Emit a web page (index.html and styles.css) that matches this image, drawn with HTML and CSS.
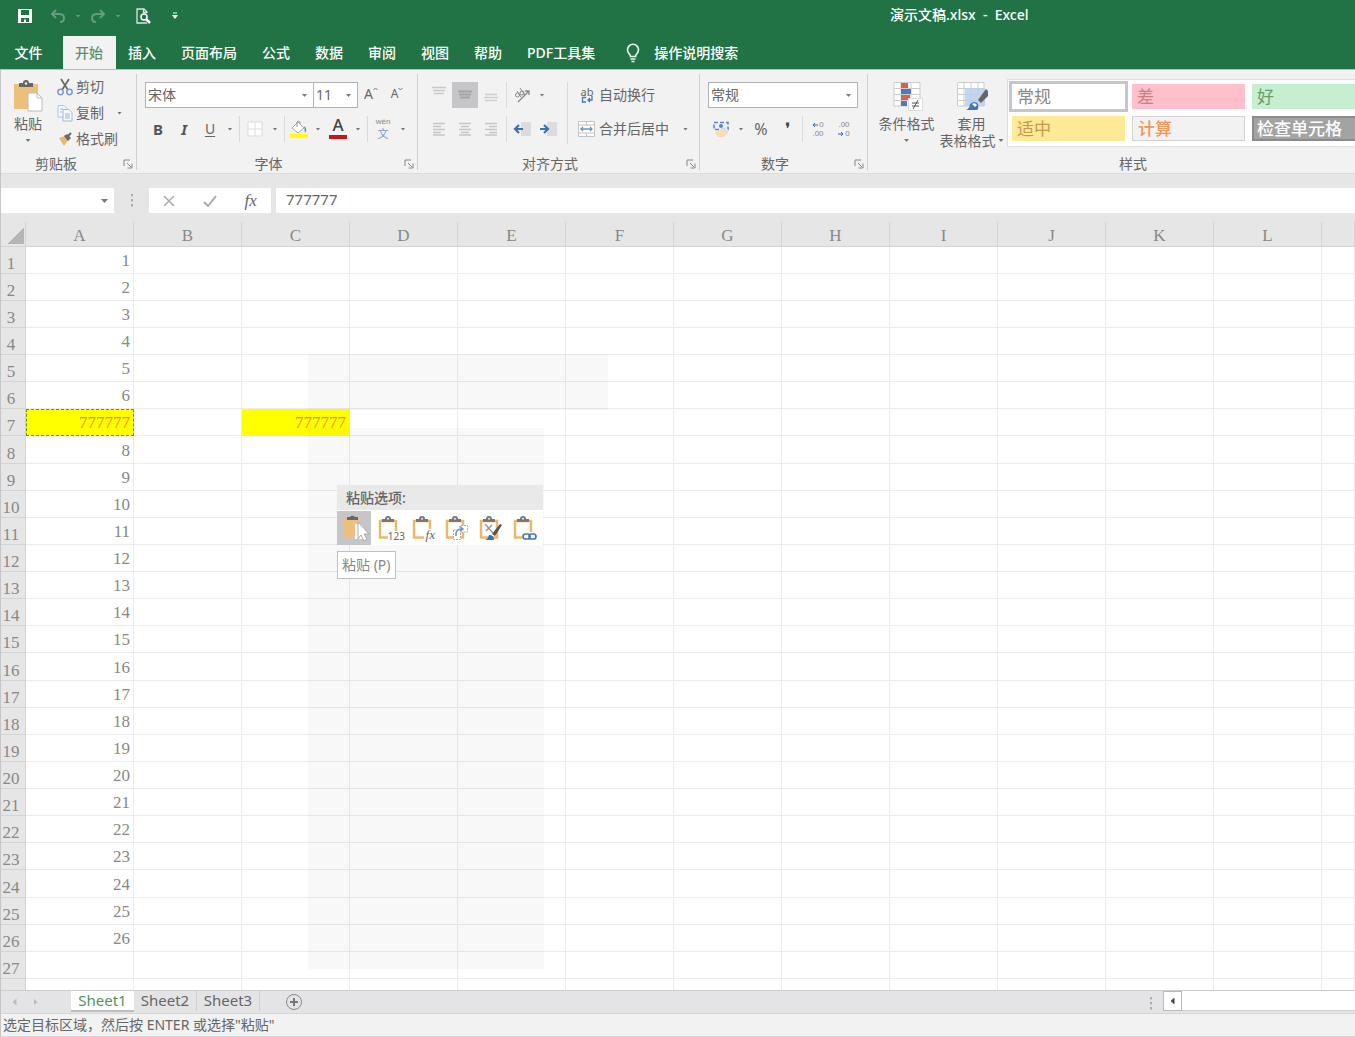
FILE: index.html
```html
<!DOCTYPE html>
<html lang="zh-CN">
<head>
<meta charset="utf-8">
<title>演示文稿.xlsx - Excel</title>
<link rel="stylesheet" href="styles.css">
</head>
<body>
<svg class="defs" width="0" height="0" aria-hidden="true">
  <symbol id="clip" viewBox="0 0 24 26">
    <path d="M4 6H20V22.500H4Z" fill="#fff" stroke="#ecb76c" stroke-width="2.500"/>
    <path d="M6 7V4h3a3 3 0 0 1 6 0h3v3Z" fill="#777"/>
    <circle cx="12" cy="3.800" r="1" fill="#eee"/>
  </symbol>
  <symbol id="launch" viewBox="0 0 10 10">
    <path d="M1 7V1H7M4 4L8 8M9 4.500V9H4.500" fill="none" stroke="#888"/>
  </symbol>
</svg>

<header class="top">
  <div class="titlebar">
    <div class="quick">
      <button aria-label="保存"><svg width="16" height="16" viewBox="0 0 16 16"><path d="M1 1H15V15H1Z" fill="#fff"/><path d="M4 2H12V7H4ZM4 10H12V14H9V11.500H7V14H4Z" fill="#217346"/></svg></button>
      <button class="dim" aria-label="撤消"><svg width="16" height="16" viewBox="0 0 16 16"><path d="M6 2L2 6L6 10M2 6H9Q14 6 14 10T10 14" fill="none" stroke="#fff" stroke-width="2"/></svg></button>
      <button class="dim tiny" aria-label="撤消选项"><i class="tri"></i></button>
      <button class="dim" aria-label="恢复"><svg width="16" height="16" viewBox="0 0 16 16"><path d="M10 2L14 6L10 10M14 6H7Q2 6 2 10T6 14" fill="none" stroke="#fff" stroke-width="2"/></svg></button>
      <button class="dim tiny" aria-label="恢复选项"><i class="tri"></i></button>
      <button class="preview" aria-label="打印预览"><svg width="16" height="18" viewBox="0 0 16 18"><path d="M12 16H2V2H9L12 5V6M8.500 2V5.500H12" fill="none" stroke="#d5e8dc" stroke-width="1.300"/><circle cx="9" cy="10" r="3" fill="none" stroke="#fff" stroke-width="1.500"/><path d="M11 12L15 16" stroke="#fff" stroke-width="2.500"/></svg></button>
      <button class="more" aria-label="自定义快速访问工具栏"><svg width="6" height="8" viewBox="0 0 6 8"><path d="M1 1H5" stroke="#fff"/><path d="M0 3H6L3 7Z" fill="#fff"/></svg></button>
    </div>
    <div class="title">演示文稿.xlsx&nbsp; -&nbsp; Excel</div>
  </div>
  <nav class="tabs">
    <button class="file">文件</button><button class="on">开始</button><button>插入</button><button>页面布局</button><button>公式</button><button>数据</button><button>审阅</button><button>视图</button><button>帮助</button><button>PDF工具集</button>
    <button class="tell"><svg width="16" height="20" viewBox="0 0 16 20"><path d="M5.500 13.500Q5.500 12 4 10.500A5.500 5.500 0 1 1 12 10.500Q10.500 12 10.500 13.500Z" fill="none" stroke="#e9f5ee" stroke-width="1.700"/><path d="M5.500 16H10.500M6.500 18.500H9.500" stroke="#e9f5ee" stroke-width="1.700"/></svg>操作说明搜索</button>
  </nav>
</header>

<main class="app">
  <section class="ribbon">
    <div class="group clipboard">
      <div class="body flat">
        <button class="big paste">
          <svg width="30" height="32" viewBox="0 0 30 32"><path d="M1 4H25V29H1Z" fill="#ecc07c"/><path d="M6 7V3h4a3 3 0 0 1 6 0h4v4Z" fill="#666"/><circle cx="13" cy="3.500" r="1.200" fill="#eee"/><path d="M15 13H24L29 18V31H15Z" fill="#fff" stroke="#bbb"/><path d="M24 13V18H29" fill="none" stroke="#bbb"/></svg>
          <span>粘贴</span><i class="tri"></i>
        </button>
        <div class="stack">
          <button><svg width="18" height="18" viewBox="0 0 18 18"><path d="M5 1L12 12M13 1L6 12" stroke="#666" stroke-width="1.700"/><circle cx="4.500" cy="14" r="2.700" fill="none" stroke="#7c9cce" stroke-width="1.500"/><circle cx="13.500" cy="14" r="2.700" fill="none" stroke="#7c9cce" stroke-width="1.500"/></svg>剪切</button>
          <button><svg width="18" height="18" viewBox="0 0 18 18"><path d="M2 1.500H8L11 4.500V13H2Z" fill="#f5f8fd" stroke="#b4c2da"/><path d="M7 5.500H13L16 8.500V17H7Z" fill="#f5f8fd" stroke="#a6b7d4"/><path d="M4 5H7M4 8H6M9 10H14M9 12H14M9 14H14" stroke="#9bb3da"/></svg>复制<i class="tri push"></i></button>
          <button><svg width="18" height="18" viewBox="0 0 18 18"><path d="M3 8L9 6L12 10L8 16Z" fill="#edb667"/><path d="M8 6L12 11L15 8L11 4Z" fill="#666"/><path d="M12 6L15 3" stroke="#666" stroke-width="2"/></svg>格式刷</button>
        </div>
      </div>
      <div class="label"><span>剪贴板</span><button aria-label="剪贴板设置"><svg width="10" height="10"><use href="#launch"/></svg></button></div>
    </div>

    <div class="group font">
      <div class="body">
        <div class="row">
          <span class="combo name"><select aria-label="字体"><option>宋体</option></select></span><span class="combo size"><select aria-label="字号"><option>11</option></select></span>
          <button class="t grow" aria-label="增大字号">A<svg width="5" height="4" viewBox="0 0 5 4"><path d="M0.500 3L2.500 1L4.500 3" fill="none" stroke="#777"/></svg></button><button class="t grow small" aria-label="减小字号">A<svg width="5" height="4" viewBox="0 0 5 4"><path d="M0.500 1L2.500 3L4.500 1" fill="none" stroke="#777"/></svg></button>
        </div>
        <div class="row">
          <button class="t"><b>B</b></button><button class="t"><b><em>I</em></b></button><button class="t"><u>U</u></button><button class="c" aria-label="下划线选项"><i class="tri"></i></button>
          <i class="sep"></i>
          <button class="t" aria-label="边框"><svg width="16" height="16" viewBox="0 0 16 16"><path d="M1 1H15V15H1ZM8 1V15M1 8H15" fill="#fff" stroke="#ddd"/></svg></button><button class="c" aria-label="边框选项"><i class="tri"></i></button>
          <i class="sep"></i>
          <button class="t fill" aria-label="填充颜色"><svg width="20" height="20" viewBox="0 0 20 20"><path d="M3 9L9 3L15 9L9 14Z" fill="#fff" stroke="#a5a5a5"/><path d="M8 8V3a2 2 0 0 1 3 0V5" fill="none" stroke="#999"/><path d="M15 7Q19 10 16 14Z" fill="#5a8ccb"/><path d="M1 15H19V19H1Z" fill="#ff0"/></svg></button><button class="c" aria-label="填充颜色选项"><i class="tri"></i></button>
          <button class="t color" aria-label="字体颜色">A</button><button class="c" aria-label="字体颜色选项"><i class="tri"></i></button>
          <i class="sep"></i>
          <button class="t wen" aria-label="拼音指南"><small>wén</small><span>文</span></button><button class="c" aria-label="拼音选项"><i class="tri"></i></button>
        </div>
      </div>
      <div class="label"><span>字体</span><button aria-label="字体设置"><svg width="10" height="10"><use href="#launch"/></svg></button></div>
    </div>

    <div class="group align">
      <div class="body split">
        <div class="side">
          <div class="row">
            <button class="t" aria-label="顶端对齐"><svg width="16" height="20" viewBox="0 0 16 20"><path d="M1 2.500H15M2 5.500H14M3 8.500H13" stroke="#c9c9c9" stroke-width="1.500"/></svg></button><button class="t sel" aria-label="垂直居中"><svg width="16" height="20" viewBox="0 0 16 20"><path d="M1 6.500H15M2 9.500H14M3 12.500H13" stroke="#a3a3a5" stroke-width="2"/></svg></button><button class="t" aria-label="底端对齐"><svg width="16" height="20" viewBox="0 0 16 20"><path d="M2 9.500H14M1 12.500H15M2 15.500H14" stroke="#cecece" stroke-width="1.500"/></svg></button>
            <i class="sep"></i>
            <button class="t" aria-label="方向"><svg width="18" height="18" viewBox="0 0 18 18"><path d="M5 16L16 5M12 5H16V9" fill="none" stroke="#888" stroke-width="1.300"/><circle cx="4.500" cy="9" r="2" fill="none" stroke="#888"/><circle cx="9" cy="7" r="2" fill="none" stroke="#888"/><path d="M4 5L8 11M7 2L12 9" stroke="#888"/></svg></button><button class="c" aria-label="方向选项"><i class="tri"></i></button>
          </div>
          <div class="row">
            <button class="t" aria-label="左对齐"><svg width="14" height="14" viewBox="0 0 14 14"><path d="M1 1.500H13M1 4.500H9M1 7.500H13M1 10.500H9M1 13H13" stroke="#c6c6c6" stroke-width="1.300"/></svg></button><button class="t" aria-label="居中"><svg width="14" height="14" viewBox="0 0 14 14"><path d="M1 1.500H13M3 4.500H11M1 7.500H13M3 10.500H11M1 13H13" stroke="#c6c6c6" stroke-width="1.300"/></svg></button><button class="t" aria-label="右对齐"><svg width="14" height="14" viewBox="0 0 14 14"><path d="M1 1.500H13M5 4.500H13M1 7.500H13M5 10.500H13M1 13H13" stroke="#c6c6c6" stroke-width="1.300"/></svg></button>
            <i class="sep"></i>
            <button class="t" aria-label="减少缩进"><svg width="18" height="16" viewBox="0 0 18 16"><path d="M8 1H18V15H8Z" fill="#dcdcde"/><path d="M10 8H3M6 4L2 8L6 12" fill="none" stroke="#3d72b0" stroke-width="2.200"/></svg></button><button class="t" aria-label="增加缩进"><svg width="18" height="16" viewBox="0 0 18 16"><path d="M8 1H18V15H8Z" fill="#dcdcde"/><path d="M1 8H8M5 4L9 8L5 12" fill="none" stroke="#3d72b0" stroke-width="2.200"/></svg></button>
          </div>
        </div>
        <div class="side ruled">
          <button class="cmd"><span class="wrapico">ab<svg width="12" height="8" viewBox="0 0 12 8"><path d="M5 1.500H1.500V6H5" fill="none" stroke="#4a78b5" stroke-width="1.300"/><path d="M11 0V4H7M9 2L7 4L9 6" fill="none" stroke="#4a78b5" stroke-width="1.300"/></svg></span>自动换行</button>
          <button class="cmd"><svg width="20" height="18" viewBox="0 0 20 18"><path d="M1.500 1.500H17.500V16.500H1.500ZM1.500 5H17.500M1.500 13H17.500M9.500 1.500V5M9.500 13V16.500" fill="#fff" stroke="#c2c2c2"/><path d="M4 9H15M6 7L4 9L6 11M13 7L15 9L13 11" fill="none" stroke="#6d94c7" stroke-width="1.300"/></svg>合并后居中<i class="tri after"></i></button>
        </div>
      </div>
      <div class="label"><span>对齐方式</span><button aria-label="对齐设置"><svg width="10" height="10"><use href="#launch"/></svg></button></div>
    </div>

    <div class="group number">
      <div class="body">
        <div class="row"><span class="combo format"><select aria-label="数字格式"><option>常规</option></select></span></div>
        <div class="row">
          <button class="t" aria-label="会计数字格式"><svg width="18" height="18" viewBox="0 0 18 18"><path d="M2 2.500H16V9.500H2Z" fill="#eaf1fb" stroke="#5a86c2" stroke-width="1.500" stroke-dasharray="4 2"/><circle cx="9" cy="6" r="2" fill="#5a86c2"/><path d="M3 13L9 9H16V13L12 17H6Z" fill="#f8dcb9"/></svg></button><button class="c" aria-label="货币选项"><i class="tri"></i></button>
          <button class="t pct">%</button><button class="t comma">❜</button>
          <i class="sep"></i>
          <button class="t dec" aria-label="增加小数位数"><span><svg width="7" height="6" viewBox="0 0 7 6"><path d="M6 3H1M3 1L1 3L3 5" fill="none" stroke="#3d62b0"/></svg>0</span><span>.00</span></button><button class="t dec" aria-label="减少小数位数"><span>.00</span><span><svg width="7" height="6" viewBox="0 0 7 6"><path d="M0 3H5M3 1L5 3L3 5" fill="none" stroke="#3d62b0"/></svg>0</span></button>
        </div>
      </div>
      <div class="label"><span>数字</span><button aria-label="数字设置"><svg width="10" height="10"><use href="#launch"/></svg></button></div>
    </div>

    <div class="group styles">
      <div class="body flat">
        <button class="big">
          <svg width="32" height="32" viewBox="0 0 32 32"><path d="M3 2.500H29V26H3ZM3 8.500H29M3 14.500H29M3 20.500H29M10 2.500V26M20 2.500V26" fill="#fff" stroke="#ccc"/><path d="M10 3H17V8H10ZM10 15H19V20H10Z" fill="#d9604a"/><path d="M10 9H20V14H10ZM10 21H16V26H10Z" fill="#4a7db8"/><path d="M17.500 18.500H31.500V30.500H17.500Z" fill="#fff" stroke="#ddd"/><path d="M21 23H28M21 26H28M27 20L22 29" stroke="#555"/></svg>
          <span>条件格式</span><i class="tri"></i>
        </button>
        <button class="big">
          <svg width="32" height="32" viewBox="0 0 32 32"><path d="M1.500 2.500H28V26H1.500ZM1.500 8.500H28M1.500 14.500H28M1.500 20.500H28M8 2.500V26M15 2.500V26M22 2.500V26" fill="#fff" stroke="#ccc"/><path d="M9 8H29V26H9Z" fill="#b7cfea" opacity=".85"/><path d="M22 20L30 9L32 11V16L25 23Z" fill="#666"/><path d="M10 30Q14 28 14 24Q19 20 22 24Q23 29 21 30Z" fill="#3f78b6"/><path d="M16 24Q19 22 21 25L19 27Z" fill="#fff"/></svg>
          <span>套用</span><span class="line">表格格式<i class="tri"></i></span>
        </button>
        <div class="gallery">
          <button class="picked">常规</button><button class="bad">差</button><button class="good">好</button>
          <button class="neutral">适中</button><button class="calc">计算</button><button class="check">检查单元格</button>
        </div>
      </div>
      <div class="label"><span>样式</span></div>
    </div>
  </section>

  <section class="formula">
    <span class="combo namebox"><input type="text" aria-label="名称框"></span>
    <span class="dots"></span>
    <div class="fbtns">
      <button aria-label="取消"><svg width="14" height="14" viewBox="0 0 14 14"><path d="M2 2L12 12M12 2L2 12" stroke="#aaa" stroke-width="1.500"/></svg></button>
      <button aria-label="输入"><svg width="14" height="14" viewBox="0 0 14 14"><path d="M1 8L5 12L13 2" fill="none" stroke="#aaa" stroke-width="2"/></svg></button>
      <button class="fx" aria-label="插入函数">fx</button>
    </div>
    <input class="finput" type="text" value="777777" aria-label="编辑栏">
  </section>

  <section class="sheet">
    <table class="grid">
      <colgroup><col class="rowcol"><col span="12" class="datacol"><col></colgroup>
      <thead><tr id="columns"><td class="corner"></td></tr></thead>
      <tbody id="rows"></tbody>
    </table>
    <div class="ghost upper"></div>
    <div class="ghost lower"></div>
    <div class="menu">
      <div class="menuhead">粘贴选项:</div>
      <div class="options">
        <button class="sel" aria-label="粘贴"><svg width="30" height="30" viewBox="0 0 30 30"><path d="M5 5H21V24H5Z" fill="#ecc07c"/><path d="M8 7V4h3a3 3 0 0 1 5 0h3v3Z" fill="#666"/><path d="M16 11H21L26 16V26H16Z" fill="#fff"/><path d="M19 9V26L22 22L25 28L28 26L25 21H30Z" fill="#fff" stroke="#aaa"/></svg></button>
        <button class="num" aria-label="值"><svg width="24" height="26"><use href="#clip"/></svg><span>123</span></button>
        <button class="fxo" aria-label="公式"><svg width="24" height="26"><use href="#clip"/></svg><span>fx</span></button>
        <button aria-label="转置"><svg width="26" height="26" viewBox="0 0 26 26"><use href="#clip" width="24" height="26"/><path d="M10.500 15H17V10.500H24.500V17H17.500V24.500H10.500Z" fill="#fff" stroke="#aaa" stroke-dasharray="2 1"/><path d="M13 21Q12 14 19 14M17 11.500L20 14L17 16.500" fill="none" stroke="#6a94c8" stroke-width="1.500"/></svg></button>
        <button aria-label="格式"><svg width="26" height="26" viewBox="0 0 26 26"><use href="#clip" width="24" height="26"/><path d="M8 9L16 18M9 16L15 10" stroke="#999" stroke-width="1.500"/><path d="M15 19L23 9L25 10L18 21Z" fill="#555"/><path d="M8 25Q11 24 12 20Q17 20 17 25Z" fill="#2f78b8"/></svg></button>
        <button aria-label="粘贴链接"><svg width="26" height="26" viewBox="0 0 26 26"><use href="#clip" width="24" height="26"/><path d="M11 17H25V26H11Z" fill="#fff"/><rect x="12" y="19" width="7" height="5" rx="2.500" fill="none" stroke="#4779ba" stroke-width="1.700"/><rect x="18" y="19" width="7" height="5" rx="2.500" fill="none" stroke="#4779ba" stroke-width="1.700"/></svg></button>
      </div>
    </div>
    <div class="tip" role="tooltip">粘贴 (P)</div>
  </section>

  <nav class="sheets">
    <button class="arrow" aria-label="上一张"><i class="left"></i></button><button class="arrow" aria-label="下一张"><i class="right"></i></button>
    <button class="tab current">Sheet1</button><button class="tab">Sheet2</button><button class="tab">Sheet3</button>
    <button class="add" aria-label="新工作表"><svg width="18" height="18" viewBox="0 0 18 18"><circle cx="9" cy="9" r="7.500" fill="none" stroke="#888"/><path d="M9 5V13M5 9H13" stroke="#777" stroke-width="2"/></svg></button>
    <div class="scroll"><span class="dots"></span><button aria-label="向左滚动"><i class="left"></i></button><div class="track"></div></div>
  </nav>
  <footer class="status">选定目标区域，然后按 ENTER 或选择"粘贴"</footer>
</main>
<script src="sheet.js"></script>
</body>
</html>
```
FILE: styles.css
```css
* { box-sizing: border-box; }
body {
  margin: 0;
  height: 100vh;
  display: flex;
  flex-direction: column;
  overflow: hidden;
  font: 14px/20px "Noto Sans", "Noto Sans CJK SC", sans-serif;
  color: #666;
  background: #e6e6e7;
}
button, input, select {
  font: inherit;
  color: inherit;
  background: none;
  border: 0;
  border-radius: 0;
  padding: 0;
  margin: 0;
}
button { display: flex; align-items: center; justify-content: center; white-space: nowrap; }
.defs { position: absolute; }
svg { display: block; flex: none; }
.tri { width: 5px; height: 3px; flex: none; background: #777; clip-path: polygon(0 0, 100% 0, 50% 100%); }

/* Title bar and tabs */
.top { background: #217346; color: #fff; border-bottom: 1px solid #9fcdb4; flex: none; }
.titlebar { height: 36px; display: flex; padding-left: 12px; }
.quick { display: flex; align-items: center; height: 32px; width: 878px; }
.quick button { width: 26px; }
.quick .tri { background: #fff; }
.quick button:nth-child(2) { margin-left: 7px; }
.quick button.dim { opacity: .3; }
.quick button.tiny { width: 14px; }
.quick button.preview { width: 30px; margin-left: 3px; }
.quick button.more { width: 34px; }
.title { line-height: 29px; white-space: nowrap; font-weight: 500; }
.tabs { display: flex; height: 33px; font-weight: 500; }
.tabs button { padding: 0 13px 0 12px; }
.tabs .file { width: 63px; padding: 0 6px 0 0; }
.tabs .on { background: #f2f2f2; color: #5d8f73; }
.tabs .tell { gap: 13px; padding-left: 17px; }

.app { flex: 1; min-height: 0; display: flex; flex-direction: column; border-left: 1px solid #c6c6c8; }

/* Ribbon */
.ribbon { display: flex; flex: none; overflow: hidden; height: 104px; padding-top: 4px; background: #f2f2f2; border-bottom: 1px solid #dcdcde; }
.group { flex: none; display: flex; flex-direction: column; background: linear-gradient(#cfcfd1, #cfcfd1) right top / 1px 96px no-repeat; }
.clipboard { width: 136px; }
.font { width: 281px; }
.align { width: 282px; }
.number { width: 168px; }
.styles { width: 530px; background: none; }
.body { height: 82px; padding: 8px 0 0 8px; display: flex; flex-direction: column; gap: 8px; }
.body.flat { flex-direction: row; gap: 0; padding-top: 0; }
.body.split { flex-direction: row; gap: 0; }
.label { height: 18px; line-height: 18px; display: flex; text-align: center; }
.label span { flex: 1; }
.label button { width: 18px; }
.clipboard .label span { padding-right: 8px; }
.row { display: flex; height: 26px; }
.side { display: flex; flex-direction: column; gap: 8px; width: 141px; }
.ruled { width: auto; padding-left: 9px; border-left: 1px solid #dadada; height: 62px; }
.t { width: 26px; height: 26px; }
.c { width: 14px; height: 26px; }
.sep { width: 1px; margin: 0 2px; background: #dadada; }
.sel { background: #c6c5c8; }
.t b { font-size: 15px; color: #555; }
.t u { text-underline-offset: 2px; }
.grow { font-size: 14px; padding-bottom: 2px; }
.grow svg { margin-bottom: 10px; }
.grow.small { font-size: 12px; }
.fill { width: 24px; }
.color { font-size: 17px; line-height: 18px; align-items: flex-start; color: #444; font-weight: 500; background: linear-gradient(#c9131b, #c9131b) center 19px / 18px 4px no-repeat; }
.wen { flex-direction: column; color: #7b98cc; font-size: 11px; line-height: 16px; }
.wen small { font: 8px/9px "Liberation Sans", sans-serif; color: #888; }
.pct { font-size: 16px; }
.comma { font-size: 17px; color: #444; }
.dec { flex-direction: column; font: 8px/9px "Liberation Sans", sans-serif; color: #888; }
.dec span { display: flex; align-items: center; }
.cmd { height: 26px; gap: 2px; justify-content: flex-start; }
.wrapico { width: 20px; display: flex; flex-direction: column; align-items: center; font-size: 11px; line-height: 9px; }
.after { margin-left: 12px; }

.combo { position: relative; display: flex; height: 26px; background: #fff; border: 1px solid #b2b2b4; }
.combo::after { content: ""; position: absolute; right: 6px; top: 11px; width: 5px; height: 3px; background: #777; clip-path: polygon(0 0, 100% 0, 50% 100%); pointer-events: none; }
.combo select { appearance: none; width: 100%; padding-left: 2px; }
.name { width: 169px; }
.size { width: 44px; border-left: 0; }
.format { width: 150px; }

.big { flex-direction: column; justify-content: flex-start; width: 65px; padding-top: 6px; line-height: 17px; }
.big svg { margin-bottom: 3px; }
.big .tri { margin-top: 7px; }
.paste { width: 38px; }
.stack { padding-left: 9px; width: 80px; flex: 1; }
.stack button { height: 26px; gap: 2px; }
.push { margin-left: 11px; }
.line { display: flex; gap: 3px; }
.line .tri { align-self: center; margin-top: 0; }
.big .line .tri { margin-top: 0; }
.styles .body { padding-left: 6px; }
.gallery { display: grid; grid-template-columns: repeat(3, 113px); grid-template-rows: 25px 25px; gap: 7px; margin: 5px 0 0 3px; height: 68px; padding: 4px 20px 4px 4px; background: #fff; border: 1px solid #ddd; font-size: 17px; }
.gallery button { justify-content: flex-start; padding-left: 5px; }
.picked { outline: 3px solid #c6c5c9; color: #888; }
.bad { background: #ffc0cb; color: #c98184; }
.good { background: #c5efce; color: #6a9c6e; }
.neutral { background: #ffe896; color: #c29a4a; }
.gallery .calc { background: #f2f2f2; border: 1px solid #d2d2d4; color: #f0975a; font-weight: 500; }
.gallery .check { background: #a3a3a3; border: 2px solid #8b8b8b; color: #fff; font-weight: 500; padding-left: 3px; }

/* Formula bar */
.formula { flex: none; display: flex; height: 48px; padding: 14px 0 9px; }
.formula .combo { width: 113px; height: 25px; border: 0; }
.formula .combo::after { width: 7px; height: 4px; }
.namebox input { width: 100%; padding: 0 20px 0 4px; }
.dots { width: 35px; background: radial-gradient(circle at 1px 1px, #aaa 1px, transparent 2px) center 6px / 2px 5px no-repeat, radial-gradient(circle at 1px 1px, #aaa 1px, transparent 2px) center 11px / 2px 5px no-repeat, radial-gradient(circle at 1px 1px, #aaa 1px, transparent 2px) center 16px / 2px 5px no-repeat; }
.fbtns { display: flex; width: 122px; margin-right: 5px; background: #fff; }
.fbtns button { width: 41px; }
.fbtns .fx { font: italic 17px/24px "Liberation Serif", serif; }
.finput { flex: 1; min-width: 0; background: #fff; padding: 0 0 3px 10px; font-size: 15px; }

/* Worksheet */
.sheet { flex: 1; min-height: 0; position: relative; overflow: hidden; }
.grid { width: 100%; table-layout: fixed; border-collapse: separate; border-spacing: 0; background: #fff; font: 17px/20px "Liberation Serif", serif; color: #888; }
.rowcol { width: 25px; }
.datacol { width: 108px; }
.grid td, .grid th { padding: 0 3px; border-right: 1px solid #ebebed; border-bottom: 1px solid #ebebed; text-align: right; font-weight: 400; overflow: hidden; }
.grid tbody td { padding-top: 2px; }
.grid tbody tr { height: 27px; }
.grid tbody tr:nth-child(8n) { height: 28px; }
.grid thead tr { height: 24px; }
.grid thead th, .grid .corner { background: #e6e6e7; border-color: #d4d4d6; text-align: center; padding-top: 4px; }
.grid .corner { background: linear-gradient(135deg, #e6e6e7 50%, #b5b5b7 50%) 7px 6px / 16px 16px no-repeat #e6e6e7; }
.grid tbody th { background: #e6e6e7; border-color: #d4d4d6; padding: 7px 4px 0 0; text-align: center; line-height: 19px; }
.grid tbody td.hot { background: #ff0; border-color: #ff0; color: #ef8a13; }
.grid tbody td.cut { border: 1px dashed #6d8a2c; padding-top: 1px; }
.ghost { position: absolute; left: 307px; background: rgba(0, 0, 0, .028); }
.upper { top: 132px; width: 300px; height: 56px; }
.lower { top: 206px; width: 236px; height: 541px; }
.menu { position: absolute; left: 336px; top: 263px; width: 206px; background: #fff; }
.menuhead { height: 25px; line-height: 25px; padding-left: 9px; background: #e9e9e9; font-weight: 500; }
.options { display: flex; padding-top: 1px; }
.options button { width: 34px; height: 34px; position: relative; }
.options span { position: absolute; right: 0; bottom: 4px; line-height: 10px; font-size: 10px; background: #fff; }
.options .fxo span { font: italic 13px/12px "Liberation Serif", serif; right: 4px; padding-left: 2px; }
.tip { position: absolute; left: 336px; top: 329px; height: 28px; line-height: 26px; padding: 0 4px; border: 1px solid #c0c0c0; background: #fff; color: #888; }

/* Sheet tabs and status bar */
.sheets { flex: none; display: flex; height: 23px; background: #e4e4e6; border-top: 1px solid #cdcdcf; }
.arrow { width: 21px; }
.arrow:first-child { margin-left: 3px; }
.left, .right { width: 4px; height: 7px; background: #bbb; }
.left { clip-path: polygon(100% 0, 100% 100%, 0 50%); }
.right { clip-path: polygon(0 0, 0 100%, 100% 50%); }
.tab { width: 63px; height: 20px; padding-bottom: 3px; font-size: 15px; border-right: 1px solid #d0d0d0; }
.tab.current { margin-left: 25px; height: 21px; padding-bottom: 2px; background: #fff; color: #4d9562; border-bottom: 2px solid #bdbdbf; border-right: 0; }
.add { width: 68px; }
.scroll { display: flex; margin-left: auto; width: 216px; height: 20px; }
.scroll button { width: 19px; background: #fff; border: 1px solid #bbb; }
.scroll .left { background: #444; }
.scroll .dots { width: 24px; }
.track { flex: 1; background: #fff; border-bottom: 1px solid #d0d0d0; }
.status { flex: none; height: 24px; line-height: 21px; padding-left: 2px; background: #f2f2f2; border-top: 1px solid #d6d6d8; border-bottom: 1px solid #d6d6d8; white-space: nowrap; }
```
FILE: sheet.js
```js
const letters = "ABCDEFGHIJKL".split("");
const head = document.getElementById("columns");
[...letters, ""].forEach((name) => {
  const th = document.createElement("th");
  th.textContent = name;
  head.append(th);
});

const body = document.getElementById("rows");
for (let n = 1; n <= 28; n++) {
  const tr = document.createElement("tr");
  const th = document.createElement("th");
  th.textContent = n <= 27 ? n : "";
  tr.append(th);
  for (let c = 0; c <= letters.length; c++) {
    const td = document.createElement("td");
    if (n === 7 && (c === 0 || c === 2)) {
      td.textContent = "777777";
      td.className = c === 0 ? "hot cut" : "hot";
    } else if (c === 0 && n <= 26) {
      td.textContent = n;
    }
    tr.append(td);
  }
  body.append(tr);
}
```
